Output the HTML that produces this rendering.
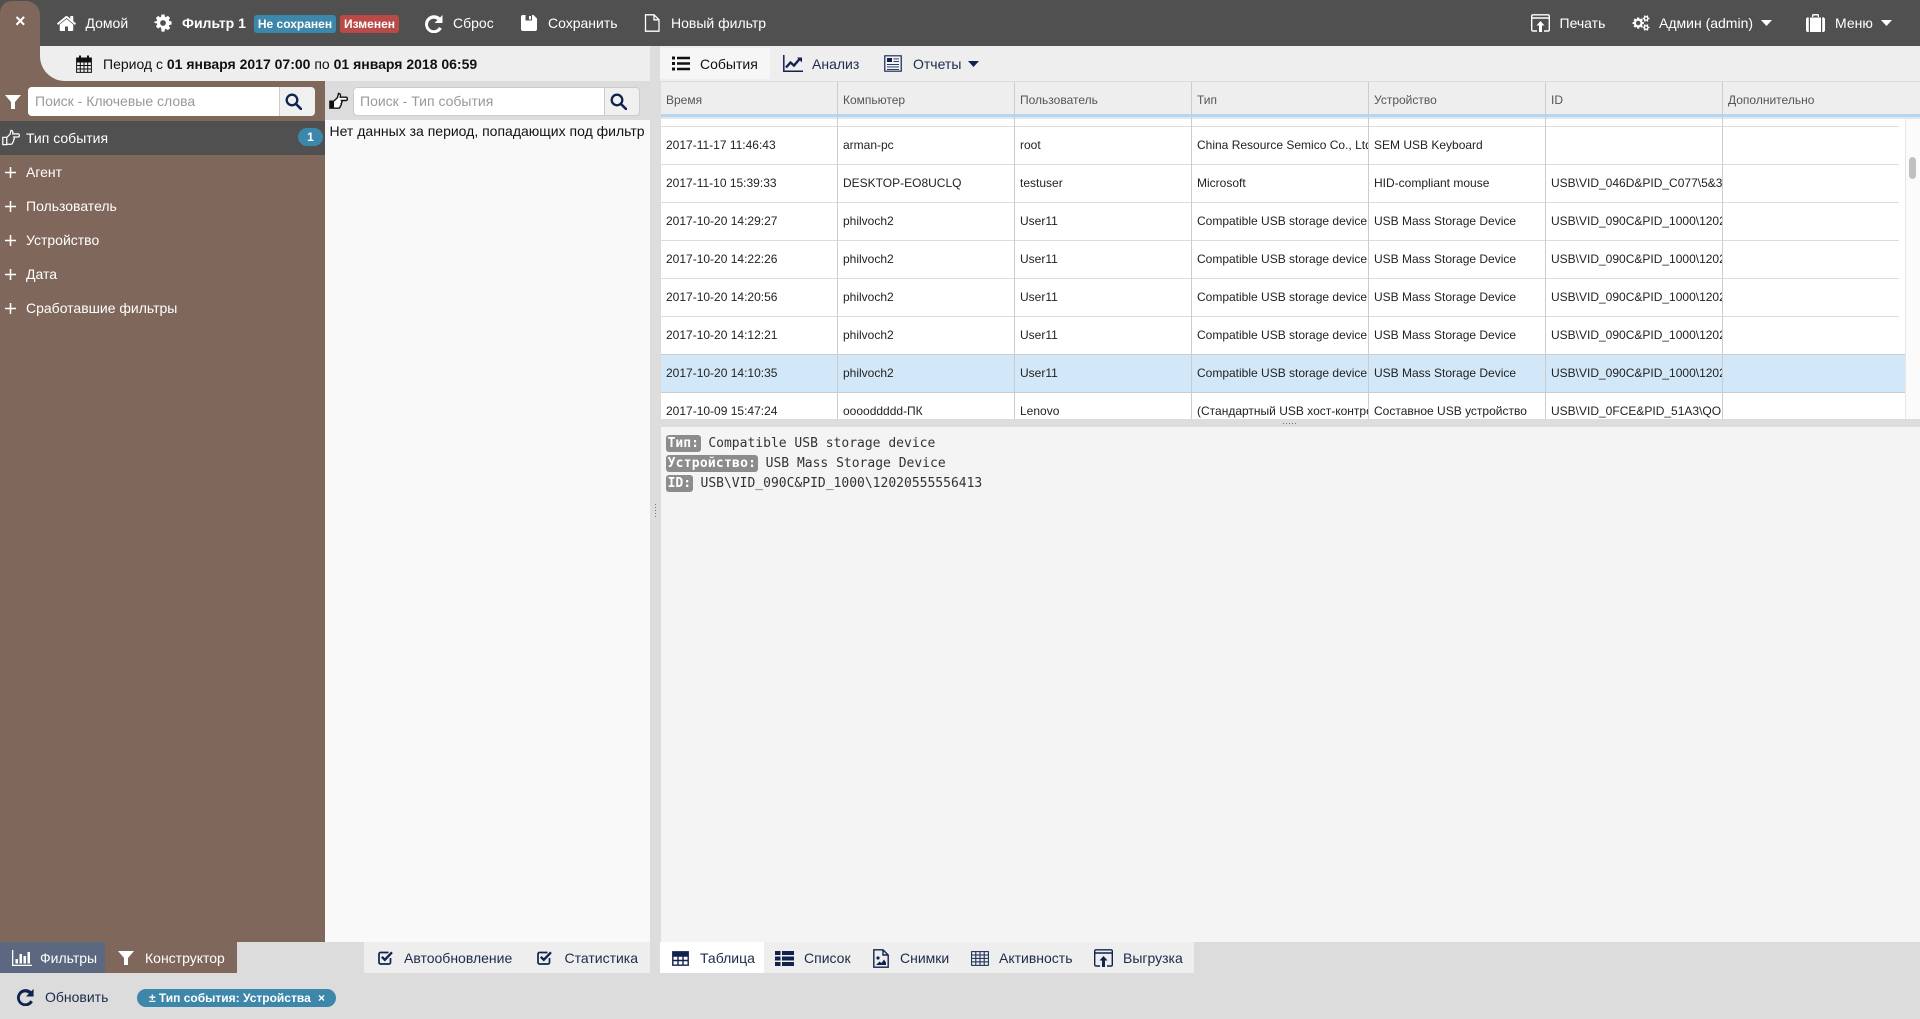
<!DOCTYPE html>
<html lang="ru"><head><meta charset="utf-8"><title>Фильтр 1</title>
<style>
html,body{margin:0;padding:0;width:1920px;height:1019px;overflow:hidden;background:#dcdcdc}
body{position:relative;font-family:"Liberation Sans",sans-serif;font-size:14px;color:#222}
.a{position:absolute}
.t{position:absolute;white-space:nowrap;line-height:20px;height:20px}
.w{color:#fff}
svg{position:absolute;display:block}
.n{fill:#10234f}
.wf{fill:#fff}
.c{position:absolute;white-space:nowrap;overflow:hidden;font-size:12px;line-height:20px;height:20px;color:#222}
.h{color:#555}
.vl{position:absolute;width:1px;top:82px;height:337px;background:#ccc}
.hl{position:absolute;left:661px;width:1238px;height:1px;background:#ddd}
.lab{background:#8c8c8c;color:#fff;font-weight:bold;border-radius:3px;padding:1px 1.6px}
.m{position:absolute;white-space:pre;font-family:"DejaVu Sans Mono","Liberation Mono",monospace;font-size:13px;line-height:20px;height:20px;color:#333}
.ph{color:#999}
.sb{position:absolute;background:#f2f2f2;border-left:1px solid #ccc;box-sizing:border-box}
.box{position:absolute;background:#fff;border:1px solid #ccc;border-radius:4px;box-sizing:border-box;overflow:hidden}
</style></head><body>

<!-- Top bar -->
<div class="a" style="left:0;top:0;width:1920px;height:46px;background:#505050"></div>
<div class="a" style="left:0;top:1px;width:40px;height:60px;background:#80675b;border-radius:12px 14px 0 0"></div>
<div class="a" style="left:0;top:46px;width:90px;height:40px;background:#80675b"></div>
<div class="a" style="left:40px;top:46px;width:610px;height:35px;background:#eee;border-radius:0 0 0 25px"></div>
<div class="a" style="left:650px;top:46px;width:10px;height:896px;background:#ddd"></div>
<div class="a" style="left:660px;top:46px;width:1260px;height:35px;background:#eee"></div>

<!-- close -->
<div class="t w" style="left:15px;top:11px;font-size:18px;font-weight:bold">×</div>

<!-- home -->
<svg style="left:56px;top:13px" width="21" height="21" viewBox="0 0 1792 1792"><path class="wf" d="M1472 992v480q0 26-19 45t-45 19h-384v-384H768v384H384q-26 0-45-19t-19-45V992q0-1 .5-3t.5-3l575-474 575 474q1 2 1 6zm223-69l-62 74q-8 9-21 11h-3q-13 0-21-7L896 424l-692 577q-12 8-24 7-13-2-21-11l-62-74q-8-10-7-23.500t11-21.500l719-599q32-26 76-26t76 26l244 204V288q0-14 9-23t23-9h192q14 0 23 9t9 23v408l219 182q10 8 11 21.500t-7 23.500z"/></svg>
<div class="t w" style="left:85.500px;top:13px">Домой</div>
<!-- cog -->
<svg style="left:153px;top:13px" width="20" height="20" viewBox="0 0 1792 1792"><path class="wf" d="M1152 896q0-106-75-181t-181-75-181 75-75 181 75 181 181 75 181-75 75-181zm512-109v222q0 12-8 23t-20 13l-185 28q-19 54-39 91 35 50 107 138 10 12 10 25t-9 23q-27 37-99 108t-94 71q-12 0-26-9l-138-108q-44 23-91 38-16 136-29 186-7 28-36 28H785q-14 0-24.500-8.500T749 1491l-28-184q-49-16-90-37l-141 107q-10 9-25 9-14 0-25-11-126-114-165-168-7-10-7-23 0-12 8-23 15-21 51-66.500t54-70.500q-27-50-41-99l-183-27q-13-2-21-12.500T128 1009V787q0-12 8-23t19-13l186-28q14-46 39-92-40-57-107-138-10-12-10-24 0-10 9-23 26-36 98.500-107.500T465 267q13 0 26 10l138 107q44-23 91-38 16-136 29-186 7-28 36-28h222q14 0 24.500 8.500T1043 153l28 184q49 16 90 37l142-107q9-9 24-9 13 0 25 10 129 119 165 170 7 8 7 22 0 12-8 23-15 21-51 66.500t-54 70.500q26 50 41 98l183 28q13 2 21 12.500t8 23.500z"/></svg>
<div class="t w" style="left:182px;top:13px;font-weight:bold">Фильтр 1</div>
<div class="a w" style="left:254px;top:15px;width:82px;height:18px;background:#3d87ab;border-radius:3px;font-size:12px;font-weight:bold;line-height:18px;text-align:center;white-space:nowrap">Не сохранен</div>
<div class="a w" style="left:340px;top:15px;width:59px;height:18px;background:#b94a48;border-radius:3px;font-size:12px;font-weight:bold;line-height:18px;text-align:center;white-space:nowrap">Изменен</div>
<!-- refresh -->
<svg style="left:424px;top:13px" width="20" height="20" viewBox="2 1 20 20"><path d="M20.500 3v8h-8l3-3A5.800 5.800 0 1 0 17 15l2.800 1.800A9 9 0 1 1 18 5.500z" fill="#fff"/></svg>
<div class="t w" style="left:453px;top:13px">Сброс</div>
<!-- save -->
<svg style="left:521px;top:15px" width="16" height="16" viewBox="0 0 16 16"><path class="wf" d="M2 0h10.500L16 3.500V14a2 2 0 0 1-2 2H2a2 2 0 0 1-2-2V2a2 2 0 0 1 2-2zM4.500 0v5.500h6.500V0zM8 1h2v3.500H8z" fill-rule="evenodd"/></svg>
<div class="t w" style="left:548px;top:13px">Сохранить</div>
<!-- new file -->
<svg style="left:644px;top:14px" width="16" height="18" viewBox="0 0 16 18"><path d="M1.500.8h8.500l5 5V17.200H1.500zM10 .8v5h5" fill="none" stroke="#fff" stroke-width="1.300"/></svg>
<div class="t w" style="left:671px;top:13px">Новый фильтр</div>

<!-- right header -->
<svg style="left:1531px;top:14px" width="19" height="18" viewBox="0 0 19 18"><path d="M6 17H2a1.300 1.300 0 0 1-1.300-1.300V2A1.300 1.300 0 0 1 2 .8h15A1.300 1.300 0 0 1 18.300 2v13.700A1.300 1.300 0 0 1 17 17h-4" fill="none" stroke="#fff" stroke-width="1.400"/><path d="M1 4h17" stroke="#fff" stroke-width="1.500"/><path class="wf" d="M9.500 7l4 4.500H11V18H8v-6.500H5.500z"/></svg>
<div class="t w" style="left:1559.500px;top:13px">Печать</div>
<svg style="left:1632px;top:14px" width="18" height="18" viewBox="0 0 2048 1792"><path class="wf" d="M960 896q0-106-75-181t-181-75-181 75-75 181 75 181 181 75 181-75 75-181zm768 512q0-52-38-90t-90-38-90 38-38 90q0 53 37.500 90.500t90.500 37.500 90.500-37.500 37.500-90.500zm0-1024q0-52-38-90t-90-38-90 38-38 90q0 53 37.500 90.500T1600 512t90.500-37.500T1728 384zm-384 421v185q0 10-7 19.500t-16 10.500l-155 24q-11 35-32 76 34 48 90 115 7 11 7 20 0 12-7 19-23 30-82.500 89.500T1064 1423q-11 0-21-7l-115-90q-37 19-77 31-11 108-23 155-7 24-30 24H612q-11 0-20-7.500t-10-17.500l-23-153q-34-10-75-31l-118 89q-7 7-20 7-11 0-21-8-144-133-144-160 0-9 7-19 10-14 41-53t47-61q-23-44-35-82l-152-24q-10-1-17-9.500T64 1000V815q0-10 7-19.500T87 785l155-24q11-35 32-76-34-48-90-115-7-10-7-20 0-12 7-20 22-30 82-89t79-59q11 0 21 7l115 90q34-18 77-32 11-108 23-154 7-24 30-24h186q11 0 20 7.500t10 17.500l23 153q34 10 75 31l118-89q8-7 20-7 11 0 21 8 144 133 144 160 0 8-7 19-12 16-42 54t-45 60q23 48 34 82l152 23q10 2 17 10.500t7 19.500zm640 533v140q0 16-149 31-12 27-30 52 51 113 51 138 0 4-4 7-122 71-124 71-8 0-46-47t-52-68q-20 2-30 2t-30-2q-14 21-52 68t-46 47q-2 0-124-71-4-3-4-7 0-25 51-138-18-25-30-52-149-15-149-31v-140q0-16 149-31 13-29 30-52-51-113-51-138 0-4 4-7 4-2 35-20t59-34 30-16q8 0 46 46.500t52 67.500q20-2 30-2t30 2q51-71 92-112l6-2q4 0 124 70 4 3 4 7 0 25-51 138 17 23 30 52 149 15 149 31zm0-1024v140q0 16-149 31-12 27-30 52 51 113 51 138 0 4-4 7-122 71-124 71-8 0-46-47t-52-68q-20 2-30 2t-30-2q-14 21-52 68t-46 47q-2 0-124-71-4-3-4-7 0-25 51-138-18-25-30-52-149-15-149-31V314q0-16 149-31 13-29 30-52-51-113-51-138 0-4 4-7 4-2 35-20t59-34 30-16q8 0 46 46.500t52 67.500q20-2 30-2t30 2q51-71 92-112l6-2q4 0 124 70 4 3 4 7 0 25-51 138 17 23 30 52 149 15 149 31z"/></svg>
<div class="t w" style="left:1659px;top:13px">Админ (admin)</div>
<svg style="left:1761px;top:20px" width="11" height="6" viewBox="0 0 11 6"><path class="wf" d="M0 0h11L5.500 6z"/></svg>
<svg style="left:1806px;top:14px" width="19" height="18" viewBox="0 0 19 18"><path class="wf" d="M6 3V1.500A1.500 1.500 0 0 1 7.500 0h4A1.500 1.500 0 0 1 13 1.500V3h-1.300V1.500H7.300V3zM4 3.500h11V18H4zM0 5.500A2 2 0 0 1 2.800 3.500V18A2 2 0 0 1 0 16zM19 5.500a2 2 0 0 0-2.800-2V18a2 2 0 0 0 2.800-2z"/></svg>
<div class="t w" style="left:1835px;top:13px">Меню</div>
<svg style="left:1881px;top:20px" width="11" height="6" viewBox="0 0 11 6"><path class="wf" d="M0 0h11L5.500 6z"/></svg>

<!-- Period -->
<svg style="left:76px;top:55px" width="16" height="18" viewBox="0 0 16 18"><path d="M.6 3h14.800v14.400H.6zM.6 7h14.800M4.300 7v10.400M8 7v10.400M11.700 7v10.400M.6 10.500h14.800M.6 14h14.800" fill="none" stroke="#111" stroke-width="1"/><path fill="#111" d="M.6 3h14.800v3.500H.6z"/><path d="M4 .5v4M12 .5v4" stroke="#111" stroke-width="2"/></svg>
<div class="t" style="left:103px;top:54px;color:#111">Период с <b>01 января 2017 07:00</b> по <b>01 января 2018 06:59</b></div>

<!-- Right tabs -->
<div class="a" style="left:660px;top:48px;width:110px;height:31px;background:#f6f6f6"></div>
<svg style="left:672px;top:56px" width="18" height="15" viewBox="0 0 18 15"><path class="n" d="M0 .5h3v3H0zM5 .8h13v2.400H5zM0 6h3v3H0zM5 6.300h13v2.400H5zM0 11.500h3v3H0zM5 11.800h13v2.400H5z" style="fill:#111"/></svg>
<div class="t" style="left:700px;top:54px;color:#111">События</div>
<svg style="left:783px;top:55px" width="20" height="17" viewBox="0 0 20 17"><path d="M.8 0v16.200H20" fill="none" stroke="#10234f" stroke-width="1.500"/><path d="M3 12.500l4.500-5 3.500 3 6-7" fill="none" stroke="#10234f" stroke-width="2.400"/><path class="n" d="M14 2.500h5v5z"/></svg>
<div class="t" style="left:812px;top:54px;color:#1c2b4a">Анализ</div>
<svg style="left:884px;top:55px" width="18" height="17" viewBox="0 0 18 17"><path d="M.8.8h16.400v15.400H.8z" fill="#f4f4f4" stroke="#10234f" stroke-width="1.200"/><path class="n" d="M3 3h5v4H3zM3 9h12v.9H3zM3 11.500h12v.9H3zM3 14h12v.9H3zM9.500 3.500H15v.9H9.500zM9.500 6H15v.9H9.500z"/></svg>
<div class="t" style="left:913px;top:54px;color:#1c2b4a">Отчеты</div>
<svg style="left:968px;top:61px" width="11" height="6" viewBox="0 0 11 6"><path class="n" d="M0 0h11L5.500 6z"/></svg>

<!-- Left brown sidebar -->
<div class="a" style="left:0;top:81px;width:325px;height:861px;background:#80675b"></div>
<div class="a" style="left:0;top:121px;width:325px;height:34px;background:#505050"></div>
<svg style="left:5px;top:95px" width="16" height="14" viewBox="0 0 16 14"><path class="wf" d="M0 0h16L10 7v7H6V7z"/></svg>
<div class="box" style="left:28px;top:87px;width:287px;height:29px;border:0;background:#f0f0f0"></div>
<div class="a" style="left:28px;top:87px;width:251px;height:29px;background:#fff;border-radius:4px 0 0 4px;border-right:1px solid #ccc"></div>
<div class="t ph" style="left:35px;top:91px">Поиск - Ключевые слова</div>
<svg style="left:285px;top:93px" width="17" height="17" viewBox="0 0 17 17"><circle cx="7" cy="7" r="5.300" fill="none" stroke="#10234f" stroke-width="2.300"/><path d="M11 11l5 5" stroke="#10234f" stroke-width="2.600" stroke-linecap="round"/></svg>

<!-- hand -->
<svg style="left:329px;top:92px" width="19" height="18" viewBox="0 0 19 18"><path d="M.2 8.500h5v8.300h-5z" fill="#111"/><path d="M5 9l3.500-3.500L9.500 1.500c1.800 0 2.300 1.500 1.800 3.700H17c1.800 0 1.800 3.300 0 3.300h-4.500c.6 1 .5 2.300-.3 3 .3 1 0 2.300-1 2.700.1 1.300-.7 2-2 2H5" fill="#fff" stroke="#111" stroke-width="1.400"/></svg>
<div class="box" style="left:353px;top:87px;width:287px;height:29px;background:#f0f0f0"></div>
<div class="a" style="left:354px;top:88px;width:250px;height:27px;background:#fff;border-radius:4px 0 0 4px;border-right:1px solid #ccc"></div>
<div class="t ph" style="left:360px;top:91px">Поиск - Тип события</div>
<svg style="left:610px;top:93px" width="17" height="17" viewBox="0 0 17 17"><circle cx="7" cy="7" r="5.300" fill="none" stroke="#10234f" stroke-width="2.300"/><path d="M11 11l5 5" stroke="#10234f" stroke-width="2.600" stroke-linecap="round"/></svg>

<!-- middle panel -->
<div class="a" style="left:325px;top:120px;width:325px;height:822px;background:#f9f9f9"></div>
<div class="t" style="left:329.500px;top:121px;color:#111">Нет данных за период, попадающих под фильтр</div>

<!-- sidebar items -->
<svg style="left:2px;top:129px" width="18" height="17" viewBox="0 0 19 18"><path d="M.8 8.800h4.200v7.700H.8z" fill="none" stroke="#fff" stroke-width="1.300"/><path d="M5 9l3.500-3.500L9.500 1.500c1.800 0 2.300 1.500 1.800 3.700H17c1.800 0 1.800 3.300 0 3.300h-4.500c.6 1 .5 2.300-.3 3 .3 1 0 2.300-1 2.700.1 1.300-.7 2-2 2H5" fill="none" stroke="#fff" stroke-width="1.300"/></svg>
<div class="t w" style="left:26px;top:128px">Тип события</div>
<div class="a w" style="left:298px;top:128px;width:25px;height:18px;background:#3d87ab;border-radius:9px;font-size:12px;font-weight:bold;line-height:18px;text-align:center">1</div>

<svg style="left:5px;top:167px" width="11" height="11" viewBox="0 0 11 11"><path d="M5.500 0v11M0 5.500h11" stroke="#fff" stroke-width="1.500"/></svg>
<div class="t w" style="left:26px;top:162px">Агент</div>
<svg style="left:5px;top:201px" width="11" height="11" viewBox="0 0 11 11"><path d="M5.500 0v11M0 5.500h11" stroke="#fff" stroke-width="1.500"/></svg>
<div class="t w" style="left:26px;top:196px">Пользователь</div>
<svg style="left:5px;top:235px" width="11" height="11" viewBox="0 0 11 11"><path d="M5.500 0v11M0 5.500h11" stroke="#fff" stroke-width="1.500"/></svg>
<div class="t w" style="left:26px;top:230px">Устройство</div>
<svg style="left:5px;top:269px" width="11" height="11" viewBox="0 0 11 11"><path d="M5.500 0v11M0 5.500h11" stroke="#fff" stroke-width="1.500"/></svg>
<div class="t w" style="left:26px;top:264px">Дата</div>
<svg style="left:5px;top:303px" width="11" height="11" viewBox="0 0 11 11"><path d="M5.500 0v11M0 5.500h11" stroke="#fff" stroke-width="1.500"/></svg>
<div class="t w" style="left:26px;top:298px">Сработавшие фильтры</div>

<!-- Table -->
<div class="a" style="left:661px;top:81px;width:1259px;height:338px;background:#fff"></div>
<div class="a" style="left:661px;top:81px;width:1259px;height:33px;background:#eee;border-top:1px solid #ddd;box-sizing:border-box"></div>
<div class="a" style="left:661px;top:114px;width:1259px;height:3px;background:#b3d7f3"></div>
<div class="a" style="left:661px;top:117px;width:1259px;height:2px;background:#e6e6e6"></div>

<div class="hl" style="top:126px"></div>
<div class="hl" style="top:164px"></div>
<div class="hl" style="top:202px"></div>
<div class="hl" style="top:240px"></div>
<div class="hl" style="top:278px"></div>
<div class="hl" style="top:316px"></div>
<div class="a" style="left:661px;top:354px;width:1244px;height:38px;background:#d2e8f9"></div>
<div class="hl" style="top:354px;background:#ccc;width:1244px"></div>
<div class="hl" style="top:392px;background:#ccc;width:1244px"></div>

<div class="vl" style="left:837px"></div>
<div class="vl" style="left:1014px"></div>
<div class="vl" style="left:1191px"></div>
<div class="vl" style="left:1368px"></div>
<div class="vl" style="left:1545px"></div>
<div class="vl" style="left:1722px"></div>

<div class="c h" style="left:666px;top:90px;width:165px">Время</div>
<div class="c h" style="left:843px;top:90px;width:165px">Компьютер</div>
<div class="c h" style="left:1020px;top:90px;width:165px">Пользователь</div>
<div class="c h" style="left:1197px;top:90px;width:165px">Тип</div>
<div class="c h" style="left:1374px;top:90px;width:165px">Устройство</div>
<div class="c h" style="left:1551px;top:90px;width:165px">ID</div>
<div class="c h" style="left:1728px;top:90px;width:165px">Дополнительно</div>

<div class="c" style="left:666px;top:135px;width:170px">2017-11-17 11:46:43</div>
<div class="c" style="left:843px;top:135px;width:170px">arman-pc</div>
<div class="c" style="left:1020px;top:135px;width:170px">root</div>
<div class="c" style="left:1197px;top:135px;width:171px">China Resource Semico Co., Ltd</div>
<div class="c" style="left:1374px;top:135px;width:171px">SEM USB Keyboard</div>

<div class="c" style="left:666px;top:173px;width:170px">2017-11-10 15:39:33</div>
<div class="c" style="left:843px;top:173px;width:170px">DESKTOP-EO8UCLQ</div>
<div class="c" style="left:1020px;top:173px;width:170px">testuser</div>
<div class="c" style="left:1197px;top:173px;width:171px">Microsoft</div>
<div class="c" style="left:1374px;top:173px;width:171px">HID-compliant mouse</div>
<div class="c" style="left:1551px;top:173px;width:171px">USB\VID_046D&amp;PID_C077\5&amp;3</div>

<div class="c" style="left:666px;top:211px;width:170px">2017-10-20 14:29:27</div>
<div class="c" style="left:843px;top:211px;width:170px">philvoch2</div>
<div class="c" style="left:1020px;top:211px;width:170px">User11</div>
<div class="c" style="left:1197px;top:211px;width:171px">Compatible USB storage device</div>
<div class="c" style="left:1374px;top:211px;width:171px">USB Mass Storage Device</div>
<div class="c" style="left:1551px;top:211px;width:171px">USB\VID_090C&amp;PID_1000\1202</div>

<div class="c" style="left:666px;top:249px;width:170px">2017-10-20 14:22:26</div>
<div class="c" style="left:843px;top:249px;width:170px">philvoch2</div>
<div class="c" style="left:1020px;top:249px;width:170px">User11</div>
<div class="c" style="left:1197px;top:249px;width:171px">Compatible USB storage device</div>
<div class="c" style="left:1374px;top:249px;width:171px">USB Mass Storage Device</div>
<div class="c" style="left:1551px;top:249px;width:171px">USB\VID_090C&amp;PID_1000\1202</div>

<div class="c" style="left:666px;top:287px;width:170px">2017-10-20 14:20:56</div>
<div class="c" style="left:843px;top:287px;width:170px">philvoch2</div>
<div class="c" style="left:1020px;top:287px;width:170px">User11</div>
<div class="c" style="left:1197px;top:287px;width:171px">Compatible USB storage device</div>
<div class="c" style="left:1374px;top:287px;width:171px">USB Mass Storage Device</div>
<div class="c" style="left:1551px;top:287px;width:171px">USB\VID_090C&amp;PID_1000\1202</div>

<div class="c" style="left:666px;top:325px;width:170px">2017-10-20 14:12:21</div>
<div class="c" style="left:843px;top:325px;width:170px">philvoch2</div>
<div class="c" style="left:1020px;top:325px;width:170px">User11</div>
<div class="c" style="left:1197px;top:325px;width:171px">Compatible USB storage device</div>
<div class="c" style="left:1374px;top:325px;width:171px">USB Mass Storage Device</div>
<div class="c" style="left:1551px;top:325px;width:171px">USB\VID_090C&amp;PID_1000\1202</div>

<div class="c" style="left:666px;top:363px;width:170px">2017-10-20 14:10:35</div>
<div class="c" style="left:843px;top:363px;width:170px">philvoch2</div>
<div class="c" style="left:1020px;top:363px;width:170px">User11</div>
<div class="c" style="left:1197px;top:363px;width:171px">Compatible USB storage device</div>
<div class="c" style="left:1374px;top:363px;width:171px">USB Mass Storage Device</div>
<div class="c" style="left:1551px;top:363px;width:171px">USB\VID_090C&amp;PID_1000\1202</div>

<div class="c" style="left:666px;top:401px;width:170px;height:18px">2017-10-09 15:47:24</div>
<div class="c" style="left:843px;top:401px;width:170px;height:18px">ooooddddd-ПК</div>
<div class="c" style="left:1020px;top:401px;width:170px;height:18px">Lenovo</div>
<div class="c" style="left:1197px;top:401px;width:171px;height:18px">(Стандартный USB хост-контроллер)</div>
<div class="c" style="left:1374px;top:401px;width:171px;height:18px">Составное USB устройство</div>
<div class="c" style="left:1551px;top:401px;width:171px;height:18px">USB\VID_0FCE&amp;PID_51A3\QO</div>

<!-- scrollbar -->
<div class="sb" style="left:1905px;top:119px;width:15px;height:300px;background:#fbfbfb;border-left:1px solid #e6e6e6"></div>
<div class="a" style="left:1909px;top:157px;width:7px;height:22px;background:#c0c0c0;border-radius:4px"></div>

<!-- splitter -->
<div class="a" style="left:660px;top:419px;width:1260px;height:8px;background:#ddd"></div>
<div class="a" style="left:1283px;top:423px;width:13px;height:1px;background-image:linear-gradient(90deg,#777 1px,transparent 1px);background-size:3px 1px"></div>
<div class="a" style="left:655px;top:504px;width:1px;height:13px;background-image:linear-gradient(#777 1px,transparent 1px);background-size:1px 3px"></div>

<!-- detail -->
<div class="a" style="left:661px;top:427px;width:1259px;height:515px;background:#f4f4f4"></div>
<div class="m" style="left:666px;top:433.500px"><span class="lab">Тип:</span> Compatible USB storage device</div>
<div class="m" style="left:666px;top:453.500px"><span class="lab" style="letter-spacing:.23px">Устройство:</span> USB Mass Storage Device</div>
<div class="m" style="left:666px;top:473.500px"><span class="lab">ID:</span> USB\VID_090C&amp;PID_1000\12020555556413</div>

<!-- Bottom -->
<div class="a" style="left:0;top:942px;width:1920px;height:77px;background:#dcdcdc"></div>
<div class="a" style="left:0;top:942px;width:105px;height:31px;background:#5c6880"></div>
<div class="a" style="left:105px;top:942px;width:132px;height:31px;background:#80675b"></div>
<div class="a" style="left:364px;top:942px;width:286px;height:31px;background:#eee"></div>
<div class="a" style="left:660px;top:942px;width:534px;height:31px;background:#eee"></div>
<div class="a" style="left:660px;top:942px;width:104px;height:31px;background:#fff"></div>

<svg style="left:12px;top:950px" width="20" height="16" viewBox="0 0 20 16"><path class="wf" d="M0 0h1.300v14.700H20V16H0zM3.500 9h2.500v4.500H3.500zM7.500 4h2.500v9.500H7.500zM11.500 6h2.500v7.500h-2.500zM15.500 2H18v11.500h-2.500z"/></svg>
<div class="t w" style="left:40px;top:948px">Фильтры</div>
<svg style="left:118px;top:951px" width="16" height="14" viewBox="0 0 16 14"><path class="wf" d="M0 0h16L10 7v7H6V7z"/></svg>
<div class="t w" style="left:145px;top:948px">Конструктор</div>

<svg style="left:378px;top:950px" width="15" height="15" viewBox="0 0 15 15"><path d="M12.500 8v4.500a1.500 1.500 0 0 1-1.500 1.500H2.500A1.500 1.500 0 0 1 1 12.500V4a1.500 1.500 0 0 1 1.500-1.500h8" fill="none" stroke="#10234f" stroke-width="1.700"/><path d="M3.800 6.800l3 3L14 2.300" fill="none" stroke="#10234f" stroke-width="2.300"/></svg>
<div class="t" style="left:404px;top:948px;color:#1c2b4a">Автообновление</div>
<svg style="left:537px;top:950px" width="15" height="15" viewBox="0 0 15 15"><path d="M12.500 8v4.500a1.500 1.500 0 0 1-1.500 1.500H2.500A1.500 1.500 0 0 1 1 12.500V4a1.500 1.500 0 0 1 1.500-1.500h8" fill="none" stroke="#10234f" stroke-width="1.700"/><path d="M3.800 6.800l3 3L14 2.300" fill="none" stroke="#10234f" stroke-width="2.300"/></svg>
<div class="t" style="left:564.500px;top:948px;color:#1c2b4a">Статистика</div>

<svg style="left:672px;top:951px" width="17" height="15" viewBox="0 0 17 15"><path d="M.8.8h15.400v13.400H.8zM.8 5h15.400M.8 9.500h15.400M6 5v9M11 5v9" fill="none" stroke="#10234f" stroke-width="1.400"/><path class="n" d="M.8.800h15.400V5H.8z"/></svg>
<div class="t" style="left:700px;top:948px;color:#1c2b4a">Таблица</div>
<svg style="left:775px;top:951px" width="19" height="15" viewBox="0 0 19 15"><path class="n" d="M0 0h5.500v4H0zM7 0h12v4H7zM0 5.500h5.500v4H0zM7 5.500h12v4H7zM0 11h5.500v4H0zM7 11h12v4H7z"/></svg>
<div class="t" style="left:804px;top:948px;color:#1c2b4a">Список</div>
<svg style="left:873px;top:949px" width="16" height="19" viewBox="0 0 16 19"><path d="M.8.800h9.200l5.200 5.200v12.200H.8zM10 .8V6h5.200" fill="none" stroke="#10234f" stroke-width="1.400"/><circle cx="5" cy="9" r="1.600" class="n"/><path class="n" d="M3 16l3.500-3.500 2 1.500 2.500-3.500 2 3V16z"/></svg>
<div class="t" style="left:900px;top:948px;color:#1c2b4a">Снимки</div>
<svg style="left:971px;top:951px" width="18" height="15" viewBox="0 0 18 15"><path d="M.6.600h16.800v13.800H.6zM.6 4h16.800M.6 7.400h16.800M.6 10.900h16.800M4.800.6v13.800M9 .6v13.800M13.200.6v13.800" fill="none" stroke="#10234f" stroke-width="1"/></svg>
<div class="t" style="left:999px;top:948px;color:#1c2b4a">Активность</div>
<svg style="left:1094px;top:949px" width="19" height="18" viewBox="0 0 19 18"><path d="M6 17H2a1.300 1.300 0 0 1-1.300-1.300V2A1.300 1.300 0 0 1 2 .8h15A1.300 1.300 0 0 1 18.300 2v13.700A1.300 1.300 0 0 1 17 17h-4" fill="none" stroke="#10234f" stroke-width="1.400"/><path d="M1 4h17" stroke="#10234f" stroke-width="1.500"/><path class="n" d="M9.500 7l4 4.500H11V18H8v-6.500H5.500z"/></svg>
<div class="t" style="left:1123px;top:948px;color:#1c2b4a">Выгрузка</div>

<svg style="left:16px;top:987px" width="19" height="19" viewBox="2 1 20 20"><path d="M20.500 3v8h-8l3-3A5.800 5.800 0 1 0 17 15l2.800 1.800A9 9 0 1 1 18 5.500z" fill="#10234f"/></svg>
<div class="t" style="left:45px;top:987px;color:#1c2b4a">Обновить</div>
<div class="a w" style="left:137px;top:989px;width:199px;height:18px;background:#3d87ab;border-radius:9px;font-size:12px;font-weight:bold;line-height:18px;white-space:nowrap"><span style="position:absolute;left:12px">± Тип события: Устройства</span><span style="position:absolute;left:181px">×</span></div>

</body></html>
